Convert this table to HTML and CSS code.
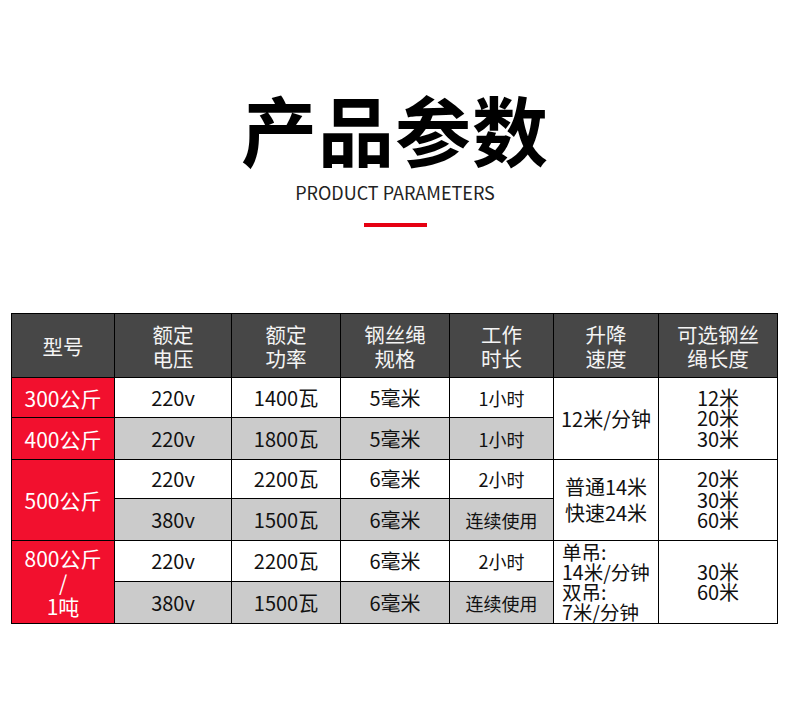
FILE: index.html
```html
<!DOCTYPE html>
<html lang="zh-CN">
<head>
<meta charset="utf-8">
<title>产品参数</title>
<link rel="stylesheet" href="styles.css">
</head>
<body>
<div class="page">
  <header class="heading">
    <h1 class="title">产品参数</h1>
    <p class="subtitle">PRODUCT PARAMETERS</p>
    <div class="rule"></div>
  </header>
  <table class="params">
    <colgroup>
      <col class="c1"><col class="c2"><col class="c3"><col class="c4"><col class="c5"><col class="c6"><col class="c7">
    </colgroup>
    <thead>
      <tr class="head">
        <th>型号</th>
        <th>额定<br>电压</th>
        <th>额定<br>功率</th>
        <th>钢丝绳<br>规格</th>
        <th>工作<br>时长</th>
        <th>升降<br>速度</th>
        <th>可选钢丝<br>绳长度</th>
      </tr>
    </thead>
    <tbody>
      <tr class="r1">
        <td class="model">300公斤</td>
        <td>220v</td>
        <td>1400瓦</td>
        <td>5毫米</td>
        <td class="small">1小时</td>
        <td rowspan="2">12米/分钟</td>
        <td rowspan="2" class="tight">12米<br>20米<br>30米</td>
      </tr>
      <tr class="r2 grey">
        <td class="model">400公斤</td>
        <td>220v</td>
        <td>1800瓦</td>
        <td>5毫米</td>
        <td class="small">1小时</td>
      </tr>
      <tr class="r3">
        <td class="model" rowspan="2">500公斤</td>
        <td>220v</td>
        <td>2200瓦</td>
        <td>6毫米</td>
        <td class="small">2小时</td>
        <td rowspan="2" class="mid">普通14米<br>快速24米</td>
        <td rowspan="2" class="tight">20米<br>30米<br>60米</td>
      </tr>
      <tr class="r4 grey">
        <td>380v</td>
        <td>1500瓦</td>
        <td>6毫米</td>
        <td class="small">连续使用</td>
      </tr>
      <tr class="r5">
        <td class="model tall" rowspan="2">800公斤<br>/<br>1吨</td>
        <td>220v</td>
        <td>2200瓦</td>
        <td>6毫米</td>
        <td class="small">2小时</td>
        <td rowspan="2" class="tight left">单吊:<br>14米/分钟<br>双吊:<br>7米/分钟</td>
        <td rowspan="2" class="tight">30米<br>60米</td>
      </tr>
      <tr class="r6 grey">
        <td>380v</td>
        <td>1500瓦</td>
        <td>6毫米</td>
        <td class="small">连续使用</td>
      </tr>
    </tbody>
  </table>
</div>
</body>
</html>
```

FILE: styles.css
```css
html, body {
  margin: 0;
  padding: 0;
  background: #ffffff;
}

body {
  font-family: "Noto Sans CJK SC", "Noto Sans", sans-serif;
  color: #111111;
}

.page {
  width: 790px;
  height: 727px;
  overflow: hidden;
}

.heading {
  display: flex;
  flex-direction: column;
  align-items: center;
  padding-top: 90px;
}

.title {
  margin: 0;
  font-size: 76px;
  line-height: 76px;
  font-weight: 700;
  color: #000000;
  letter-spacing: 1px;
}

.subtitle {
  margin: 16px 0 0 0;
  font-size: 18px;
  line-height: 20px;
  font-weight: 400;
  color: #222222;
}

.rule {
  width: 63px;
  height: 4px;
  margin-top: 21px;
  background: #e60012;
}

.params {
  margin: 86px 0 0 11px;
  border-collapse: collapse;
  table-layout: fixed;
  width: 766px;
}

.c1 { width: 103px; }
.c2 { width: 117px; }
.c3 { width: 109px; }
.c4 { width: 109px; }
.c5 { width: 104px; }
.c6 { width: 105px; }
.c7 { width: 119px; }

.params th,
.params td {
  border: 1px solid #000000;
  padding: 0;
  text-align: center;
  vertical-align: middle;
  font-size: 20px;
  line-height: 24px;
  font-weight: 400;
}

.head th {
  background: #474747;
  color: #f4f4f4;
  font-size: 20.5px;
  line-height: 24px;
}

.head { height: 64px; }
.r1 { height: 40px; }
.r2 { height: 42px; }
.r3 { height: 39px; }
.r4 { height: 42px; }
.r5 { height: 41px; }
.r6 { height: 42px; }

.params td.model {
  background: #f2102e;
  color: #ffffff;
  font-size: 21px;
}

.params td.tall {
  line-height: 24px;
}

.grey td {
  background: #cbcbcb;
}

.grey td.model {
  background: #f2102e;
}

.params td.small {
  font-size: 18px;
}

.params td.tight {
  line-height: 20.5px;
}

.params td.mid {
  line-height: 26px;
}

.params td.left {
  text-align: left;
  padding-left: 8px;
  font-size: 19.5px;
  line-height: 20px;
}
```
